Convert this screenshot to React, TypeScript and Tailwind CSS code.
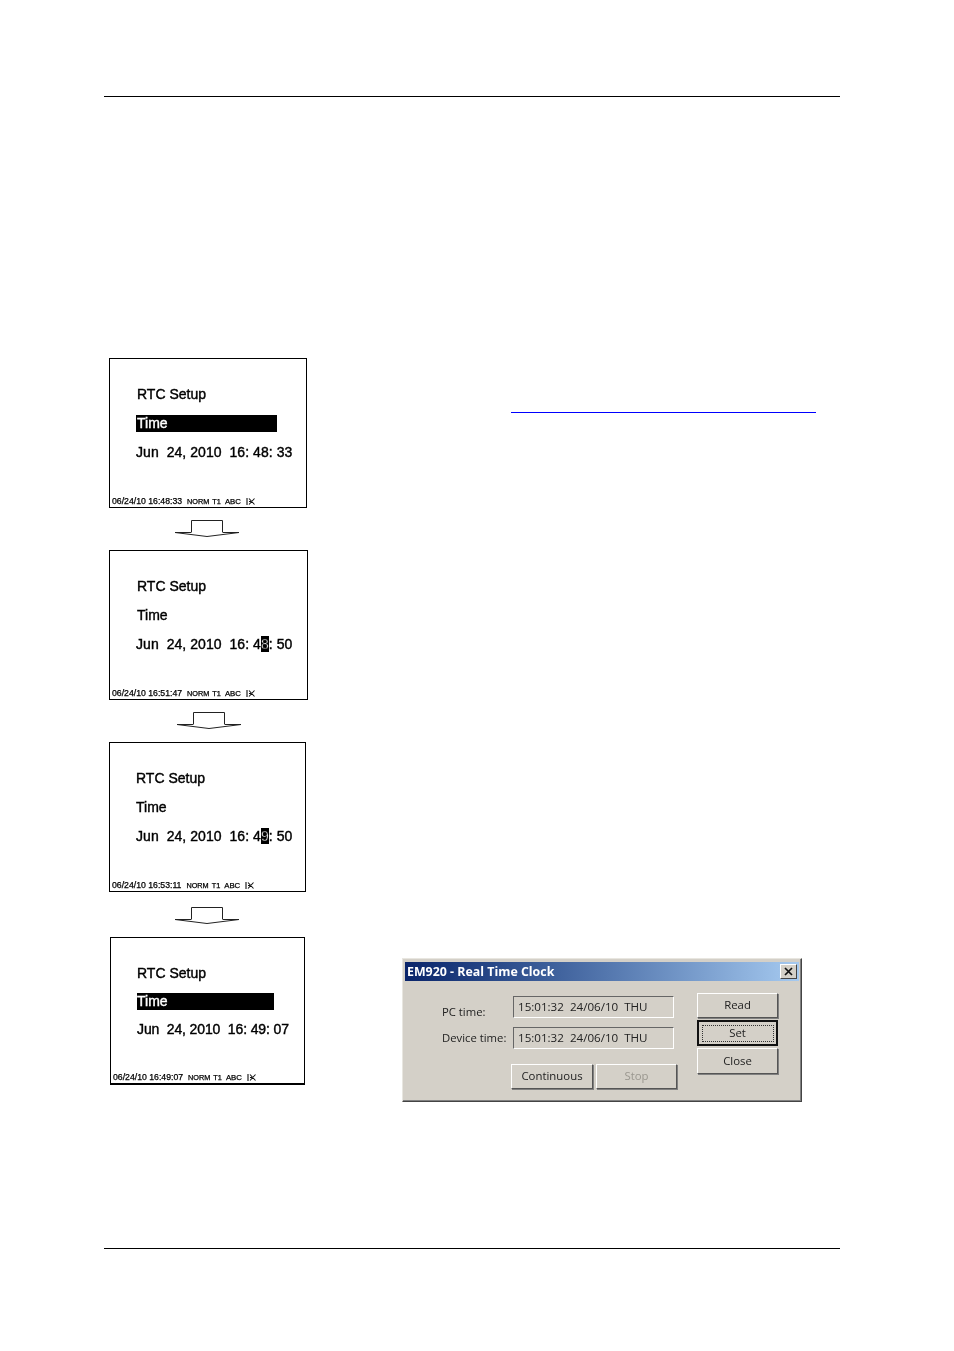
const sans = "font-['Liberation_Sans',Arial,sans-serif]";
const ui = "font-['Open_Sans','Noto_Sans',sans-serif]";

type ScreenProps = {
  className: string;
  textPad?: string;
  barClass?: string;
  dateClass?: string;
  highlightRow?: boolean;
  date: React.ReactNode;
  stamp: string;
};

function StatusIcon() {
  return (
    <svg className="ml-[5px] inline-block align-[-1px]" width="9" height="7" viewBox="0 0 9 7" fill="none" stroke="#111" strokeWidth="1.1">
      <path d="M1 0V7M3 0.5L8.5 6.5M8.5 0.5L3 6.5M3 3.5H5" />
    </svg>
  );
}

function Screen({
  className,
  textPad = "pl-px",
  barClass = "mt-[13px] w-[141px]",
  dateClass = "mt-[12px] tracking-[0.06px]",
  highlightRow,
  date,
  stamp,
}: ScreenProps) {
  return (
    <div className={`flex flex-col bg-white border border-black text-black ${sans} ${className}`}>
      <div className="pl-[26px] pt-[27px]">
        <div className={`h-[16px] text-[14px] leading-[16px] [-webkit-text-stroke:0.4px_black] ${textPad}`}>RTC Setup</div>
        <div
          className={`h-[17px] text-[14px] leading-[17px] [-webkit-text-stroke:0.4px] ${textPad} ${barClass} ${
            highlightRow ? "bg-black text-white" : ""
          }`}
        >
          Time
        </div>
        <div className={`h-[16px] whitespace-pre text-[14px] leading-[16px] [-webkit-text-stroke:0.4px_black] ${dateClass}`}>{date}</div>
      </div>
      <div className="mt-auto pl-[2px] text-[8.7px] leading-[10px] whitespace-pre [-webkit-text-stroke:0.25px_black]">
        {stamp}
        <span className="ml-[5px] text-[7.3px]">NORM</span>
        <span className="ml-[3px] text-[7.3px]">T1</span>
        <span className="ml-[4px] text-[7.8px]">ABC</span>
        <StatusIcon />
      </div>
    </div>
  );
}

function Arrow({ className }: { className: string }) {
  return (
    <svg className={className} width="64" height="17" viewBox="0 0 64 17" fill="none" stroke="#222" strokeWidth="1">
      <path d="M16.5 12V0.5H47.5V12" />
      <path d="M0 12.5H16.5M47.5 12.5H64" />
      <path d="M0 12.5L32 16.5L64 12.5" />
    </svg>
  );
}

function Digit({ children }: { children: string }) {
  return <span className="bg-black text-white">{children}</span>;
}

function WinButton({
  children,
  className,
  disabled,
  focused,
}: {
  children: string;
  className: string;
  disabled?: boolean;
  focused?: boolean;
}) {
  return (
    <div
      className={`flex items-center justify-center bg-[#d4d0c8] text-[11.4px] leading-none ${ui} ${
        focused
          ? "border-2 border-[#111]"
          : "border border-t-white border-l-white border-r-[#555] border-b-[#555] shadow-[1px_1px_0_#808080]"
      } ${disabled ? "text-[#9a978f]" : "text-[#222]"} ${className}`}
    >
      {focused ? (
        <div className="flex h-[17px] w-[72px] items-center justify-center border border-dotted border-[#333]">{children}</div>
      ) : (
        children
      )}
    </div>
  );
}

function TimeField({ children }: { children: string }) {
  return (
    <div
      className={`flex h-[22px] w-[161px] items-center border border-t-[#666] border-l-[#666] border-r-white border-b-white pl-[4px] text-[11.6px] text-[#222] whitespace-pre ${ui}`}
    >
      {children}
    </div>
  );
}

function RtcDialog() {
  return (
    <div className="flex h-[144px] w-[400px] flex-col border border-t-[#e8e6e0] border-l-[#e8e6e0] border-r-[#444] border-b-[#444] bg-[#d4d0c8] px-[2px] pt-[3px] shadow-[inset_-1px_-1px_0_#808080]">
      <div className="flex h-[19px] items-center justify-between bg-gradient-to-r from-[#0a246a] to-[#a6caf0] pl-[2px] pr-[2px]">
        <span className={`pt-px text-[12.4px] font-bold text-white ${ui}`}>EM920 - Real Time Clock</span>
        <div className="flex h-[15px] w-[17px] items-center justify-center border border-t-white border-l-white border-r-[#444] border-b-[#444] bg-[#d4d0c8]">
          <svg width="9" height="9" viewBox="0 0 9 9" stroke="#111" strokeWidth="1.7">
            <path d="M1 1L8 8M8 1L1 8" />
          </svg>
        </div>
      </div>
      <div className="flex">
        <div className="ml-[37px] w-[70px] pt-[23px]">
          <div className={`text-[11.3px] leading-[16px] text-[#222] ${ui}`}>PC time:</div>
          <div className={`mt-[10px] text-[11.3px] leading-[16px] whitespace-pre text-[#222] ${ui}`}>Device time:</div>
        </div>
        <div className="ml-[1px] w-[184px] pt-[15px]">
          <TimeField>15:01:32  24/06/10  THU</TimeField>
          <div className="mt-[9px]">
            <TimeField>15:01:32  24/06/10  THU</TimeField>
          </div>
          <div className="-ml-[2px] mt-[15px] flex gap-[3px]">
            <WinButton className="h-[25px] w-[82px] pb-px">Continuous</WinButton>
            <WinButton className="h-[25px] w-[81px] pb-px" disabled>
              Stop
            </WinButton>
          </div>
        </div>
        <div className="flex flex-col gap-[2px] pt-[12px]">
          <WinButton className="h-[25px] w-[81px] pb-px">Read</WinButton>
          <WinButton className="h-[26px] w-[81px]" focused>
            Set
          </WinButton>
          <WinButton className="h-[26px] w-[81px]">Close</WinButton>
        </div>
      </div>
    </div>
  );
}

export default function App() {
  return (
    <div className="h-[1351px] w-[954px] bg-white pt-[96px] blur-[0.3px]">
      <div className="ml-[104px] h-px w-[736px] bg-black" />
      <div className="flex pt-[261px]">
        {/* left column, the four meter screens */}
        <div className="ml-[109px] w-[211px] shrink-0">
          <Screen className="h-[150px] w-[198px]" highlightRow date="Jun  24, 2010  16: 48: 33" stamp="06/24/10 16:48:33" />
          <Arrow className="ml-[66px] mt-[12px]" />
          <Screen
            className="mt-[13px] h-[150px] w-[199px]"
            date={
              <>
                Jun  24, 2010  16: 4<Digit>8</Digit>: 50
              </>
            }
            stamp="06/24/10 16:51:47"
          />
          <Arrow className="ml-[68px] mt-[12px]" />
          <Screen
            className="mt-[13px] h-[150px] w-[197px]"
            textPad="pl-0"
            date={
              <>
                Jun  24, 2010  16: 4<Digit>9</Digit>: 50
              </>
            }
            stamp="06/24/10 16:53:11"
          />
          <Arrow className="ml-[66px] mt-[15px]" />
          <Screen
            className="ml-px mt-[13px] h-[148px] w-[195px] border-b-2"
            textPad="pl-0"
            barClass="mt-[12px] w-[137px]"
            dateClass="mt-[11px] tracking-[-0.12px]"
            highlightRow
            date="Jun  24, 2010  16: 49: 07"
            stamp="06/24/10 16:49:07"
          />
        </div>
        {/* right column */}
        <div className="flex-1">
          <div className="ml-[191px] mt-[54px] h-px w-[305px] bg-[#0000ff]" />
          <div className="ml-[82px] mt-[545px]">
            <RtcDialog />
          </div>
        </div>
      </div>
      <div className="ml-[104px] mt-[146px] h-px w-[736px] bg-black" />
    </div>
  );
}
